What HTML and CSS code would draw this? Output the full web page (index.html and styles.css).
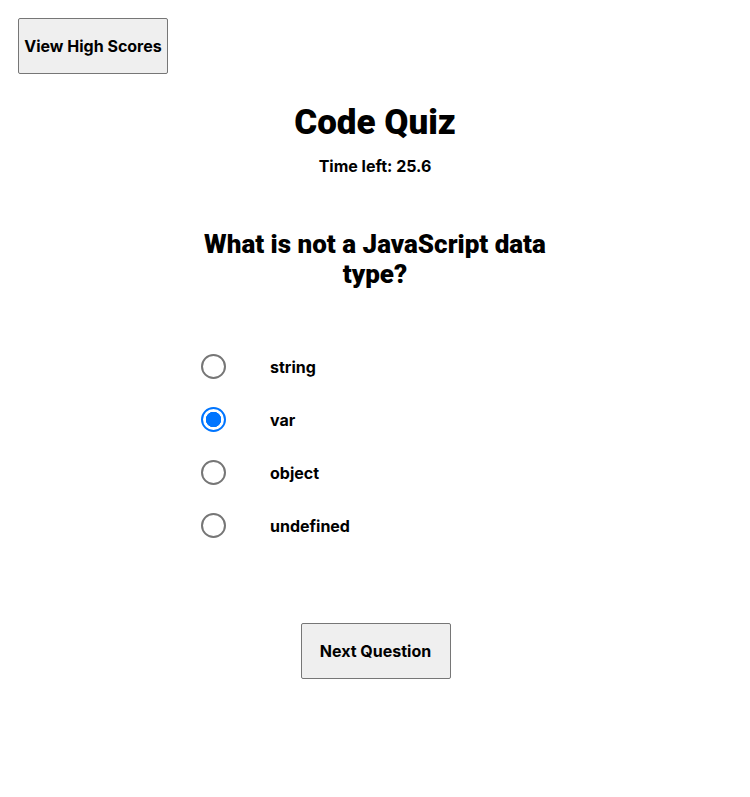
FILE: index.html
```html
<!DOCTYPE html>
<html>
<head>
<meta charset="utf-8">
<link rel="stylesheet" href="styles.css">
</head>
<body>
<header class="top">
  <button class="btn">View High Scores</button>
</header>
<main class="quiz">
  <h1 class="title">Code Quiz</h1>
  <p class="timer">Time left: 25.6</p>
  <section class="card">
    <h2 class="question">What is not a JavaScript data type?</h2>
    <ul class="answers">
      <li class="answer"><input type="radio" name="a" class="radio"><span class="label">string</span></li>
      <li class="answer"><input type="radio" name="a" class="radio" checked><span class="label">var</span></li>
      <li class="answer"><input type="radio" name="a" class="radio"><span class="label">object</span></li>
      <li class="answer"><input type="radio" name="a" class="radio"><span class="label">undefined</span></li>
    </ul>
  </section>
  <button class="btn next">Next Question</button>
</main>
</body>
</html>
```
FILE: styles.css
```css
body {
  margin: 0;
  padding: 18px;
  font-family: Inter, "Liberation Sans", sans-serif;
  color: #000;
  background: #fff;
}
.top {
  display: flex;
}
.btn {
  width: 150px;
  height: 56px;
  background: #efefef;
  border: 1px solid #767676;
  border-radius: 2px;
  font-family: Inter, "Liberation Sans", sans-serif;
  font-weight: 700;
  font-size: 16px;
  color: #000;
  padding: 0;
}
.quiz {
  display: flex;
  flex-direction: column;
  align-items: center;
}
.title {
  margin: 27px 0 0;
  font-family: Roboto, "Liberation Sans", sans-serif;
  font-size: 35px;
  font-weight: 900;
  line-height: 44px;
}
.timer {
  margin: 11px 0 0;
  font-size: 16px;
  font-weight: 700;
  line-height: 20px;
}
.card {
  width: 360px;
  margin-top: 53px;
}
.question {
  margin: 0;
  text-align: center;
  font-family: Roboto, "Liberation Sans", sans-serif;
  font-size: 26px;
  font-weight: 900;
  line-height: 30px;
}
.answers {
  list-style: none;
  margin: 51px 0 0;
  padding: 0;
}
.answer {
  display: flex;
  align-items: center;
  height: 53px;
}
.radio {
  appearance: none;
  -webkit-appearance: none;
  box-sizing: border-box;
  width: 25px;
  height: 25px;
  margin: 0 0 0 6px;
  border: 2px solid #767676;
  border-radius: 50%;
  background: #fff;
  flex: none;
}
.radio:checked {
  border-color: #0075ff;
  background: radial-gradient(circle, #0075ff 0 7.5px, #fff 8px);
}
.label {
  margin-left: 44px;
  font-size: 16px;
  font-weight: 700;
}
.next {
  margin: 71px 0 0 1px;
}
```
